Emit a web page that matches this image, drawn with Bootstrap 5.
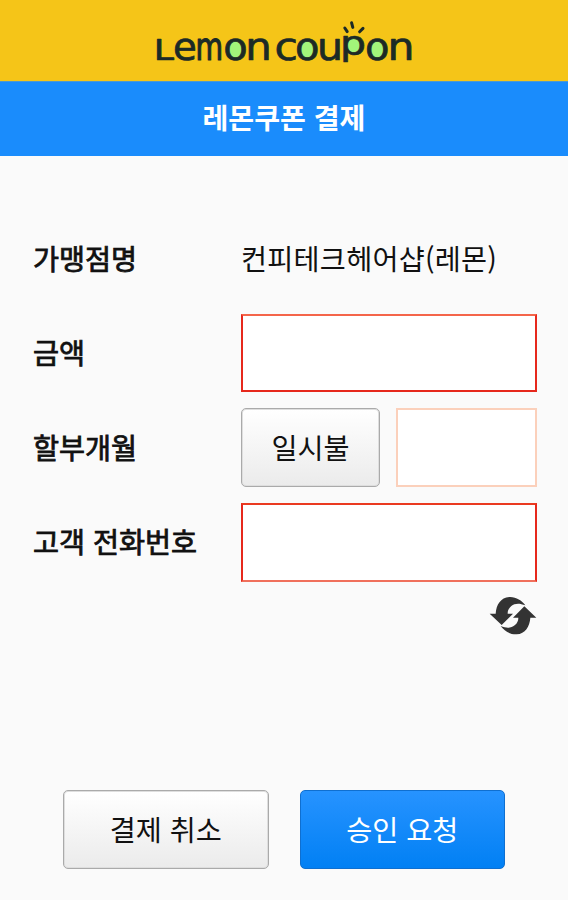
<!DOCTYPE html>
<html lang="ko">
<head>
<meta charset="utf-8">
<meta name="viewport" content="width=device-width, initial-scale=1">
<title>레몬쿠폰 결제</title>
<link href="https://cdn.jsdelivr.net/npm/bootstrap@5.3.0/dist/css/bootstrap.min.css" rel="stylesheet">
<style>
body{background:#fafafa;color:#111;font-family:"Noto Sans CJK KR",sans-serif;font-size:28.3px;line-height:1.2;height:900px;overflow:hidden}
.brand-bar{height:81px;background:#f5c518}
.title-bar{height:74.5px;background:#1a8cfc;font-size:28.1px;line-height:1;border-top:1px solid #4f98cf;padding-bottom:3px}
.pay-form{padding:63.5px 31px 0 33px;row-gap:15.6px}
.pay-row{height:79px}
.pay-label{width:208px;-webkit-text-stroke:.8px #111;padding-bottom:2px}
.shop-name{letter-spacing:.25px;padding-bottom:1px}
.form-control.pay-input{height:78.5px;border:2px solid #e6281c;border-top-color:#f4654a;background:#fff}
.form-control.phone-input{border-top-color:#ea3a20;border-bottom-color:#f0705c}
.form-control.month-input{border-color:#fbd0bb}
.pay-btn{height:79px;font-size:28.3px;border-radius:5px;line-height:1;padding:0 0 1px}
.btn-plain,.btn-plain:hover{color:#111;border:1px solid #aaa;box-shadow:inset 0 0 0 1px #dedede;background:linear-gradient(#fff,#ebebeb)}
.btn-approve,.btn-approve:hover{color:#fff;border:1px solid #0f6fd0;background:linear-gradient(#2793ff,#0180f4)}
.month-btn{width:139px}
.wide-btn{width:205.5px}
.refresh{padding-right:18px;margin-top:8px}
.actions{padding:0 63px;margin-top:150.2px}
</style>
<script src="https://cdn.jsdelivr.net/npm/bootstrap@5.3.0/dist/js/bootstrap.bundle.min.js"></script>
</head>
<body>
<header class="brand-bar">
<svg class="d-block" width="568" height="81" role="img" aria-label="Lemon coupon">
<g fill="#a2f57a"><circle cx="235.2" cy="49.5" r="8.7"/><circle cx="307" cy="49.5" r="8.7"/><circle cx="353.3" cy="44.2" r="8.3"/><circle cx="377.3" cy="49.5" r="8.7"/></g>
<g font-family="DejaVu Sans" font-size="37" fill="#1c2a26" stroke="#1c2a26" stroke-width=".7" stroke-linejoin="round">
<text x="153.7" y="60" font-size="29" textLength="20.2" lengthAdjust="spacingAndGlyphs">L</text>
<text x="173.1" y="60" textLength="23.8" lengthAdjust="spacingAndGlyphs">e</text>
<text transform="translate(195.6 60) scale(.765 1)" stroke-width="1.2">m</text>
<text x="223.2" y="60" textLength="24.4" lengthAdjust="spacingAndGlyphs">o</text>
<text x="245.2" y="60" textLength="26.5" lengthAdjust="spacingAndGlyphs">n</text>
<text x="274.6" y="60" textLength="23.4" lengthAdjust="spacingAndGlyphs">c</text>
<text x="294.9" y="60" textLength="24.4" lengthAdjust="spacingAndGlyphs">o</text>
<text x="317" y="60" textLength="26" lengthAdjust="spacingAndGlyphs">u</text>
<text x="340" y="54.5" font-size="34" textLength="26" lengthAdjust="spacingAndGlyphs">p</text>
<text x="365.1" y="60" textLength="24.4" lengthAdjust="spacingAndGlyphs">o</text>
<text x="387.4" y="60" textLength="27" lengthAdjust="spacingAndGlyphs">n</text>
</g>
<path d="M344.8 28l2.4 3.6M351.6 22.8l1.2 4.6M363 28.4l-3.4 3.4" stroke="#1c2a26" stroke-width="3" stroke-linecap="round"/>
</svg>
</header>
<h1 class="title-bar d-flex align-items-center justify-content-center text-white fw-bold mb-0"><span>레몬쿠폰 결제</span></h1>
<main>
<form class="pay-form d-flex flex-column">
<div class="pay-row d-flex align-items-center"><span class="pay-label">가맹점명</span><span class="shop-name text-nowrap">컨피테크헤어샵(레몬)</span></div>
<div class="pay-row d-flex align-items-center"><label class="pay-label flex-shrink-0" for="amount">금액</label><input id="amount" class="form-control pay-input rounded-0"></div>
<div class="pay-row d-flex align-items-center"><label class="pay-label flex-shrink-0" for="months">할부개월</label><button type="button" class="btn pay-btn btn-plain month-btn flex-shrink-0 me-3">일시불</button><input id="months" class="form-control pay-input month-input rounded-0"></div>
<div class="pay-row d-flex align-items-center"><label class="pay-label flex-shrink-0" for="phone">고객 전화번호</label><input id="phone" class="form-control pay-input phone-input rounded-0"></div>
</form>
<div class="refresh d-flex justify-content-end">
<svg width="70" height="50" viewBox="0 0 210 150" fill="#333" role="img" aria-label="새로고침">
<path id="swirl" d="M29 71H47C49 44 62 23 88 21C108 20 125 31 136 46C117 38 104 40 94 48C86 55 83 62 83 71H99L65 105Z"/>
<use href="#swirl" transform="rotate(180 99 77)"/>
</svg>
</div>
<div class="actions d-flex justify-content-between">
<button type="button" class="btn pay-btn btn-plain wide-btn">결제 취소</button>
<button type="button" class="btn pay-btn btn-approve wide-btn">승인 요청</button>
</div>
</main>
</body>
</html>
